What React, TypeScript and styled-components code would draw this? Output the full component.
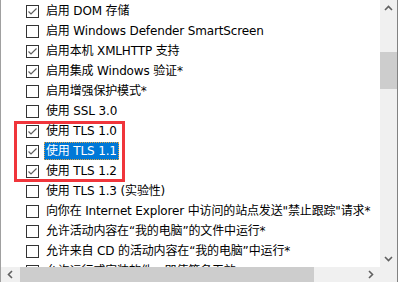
import React from 'react';
import styled, {createGlobalStyle} from 'styled-components';

const GlobalStyle = createGlobalStyle`
    html, body {
        margin: 0;
        padding: 0;
        background: #ffffff;
    }
    body {
        font-family: "DejaVu Sans", "Noto Sans CJK SC", sans-serif;
    }
`;

type Item = {label: string; checked: boolean; selected?: boolean};

const ITEMS: Item[] = [
    {label: '启用 DOM 存储', checked: true},
    {label: '启用 Windows Defender SmartScreen', checked: false},
    {label: '启用本机 XMLHTTP 支持', checked: true},
    {label: '启用集成 Windows 验证*', checked: true},
    {label: '启用增强保护模式*', checked: false},
    {label: '使用 SSL 3.0', checked: false},
    {label: '使用 TLS 1.0', checked: true},
    {label: '使用 TLS 1.1', checked: true, selected: true},
    {label: '使用 TLS 1.2', checked: true},
    {label: '使用 TLS 1.3 (实验性)', checked: false},
    {label: '向你在 Internet Explorer 中访问的站点发送"禁止跟踪"请求*', checked: false},
    {label: '允许活动内容在“我的电脑”的文件中运行*', checked: false},
    {label: '允许来自 CD 的活动内容在“我的电脑”中运行*', checked: false},
    {label: '允许运行或安装软件，即使签名无效', checked: false},
];

const CheckMark = () => (
    <svg width="11" height="11" viewBox="0 0 11 11">
        <polyline points="1.5,5.5 4,8 9.5,2.5" fill="none" stroke="#5f5f5f" strokeWidth="1.2"/>
    </svg>
);

const Chevron = ({dir}: {dir: 'up' | 'down' | 'left' | 'right'}) => {
    const paths = {
        up: '1,6 4.5,2.5 8,6',
        down: '1,3 4.5,6.5 8,3',
        left: '6,1 2.5,4.5 6,8',
        right: '3,1 6.5,4.5 3,8',
    };
    return (
        <svg width="9" height="9" viewBox="0 0 9 9">
            <polyline points={paths[dir]} fill="none" stroke="#606060" strokeWidth="1.6"/>
        </svg>
    );
};

export default function App() {
    return (
        <>
            <GlobalStyle/>
            <Frame>
                <ListArea>
                    {ITEMS.map((item) => (
                        <Row key={item.label}>
                            <Box>{item.checked && <CheckMark/>}</Box>
                            <Label selected={item.selected}>{item.label}</Label>
                        </Row>
                    ))}
                    <Highlight/>
                </ListArea>

                <VScroll>
                    <ArrowCell><Chevron dir="up"/></ArrowCell>
                    <VTrack>
                        <VThumb/>
                    </VTrack>
                    <ArrowCell><Chevron dir="down"/></ArrowCell>
                </VScroll>

                <HScroll>
                    <HArrowCell><Chevron dir="left"/></HArrowCell>
                    <HTrack>
                        <HThumb/>
                    </HTrack>
                    <HArrowCell><Chevron dir="right"/></HArrowCell>
                </HScroll>

                <Corner/>
            </Frame>
        </>
    );
}

const Frame = styled.div`
    display: grid;
    grid-template-columns: 1fr 17px;
    grid-template-rows: 267px 1fr;
    width: 398px;
    height: 282px;
    box-sizing: border-box;
    border-left: 1px solid #a0a0a0;
    border-right: 1px solid #828282;
    overflow: hidden;
`;

const ListArea = styled.div`
    position: relative;
    overflow: hidden;
    padding-top: 1px;
    background: #ffffff;
`;

const Row = styled.div`
    display: flex;
    align-items: center;
    height: 20px;
    padding-left: 25px;
    gap: 7px;
    white-space: nowrap;
`;

const Box = styled.div`
    flex: none;
    display: flex;
    align-items: center;
    justify-content: center;
    width: 13px;
    height: 13px;
    box-sizing: border-box;
    border: 1px solid #333333;
    background: #ffffff;
`;

const Label = styled.span<{selected?: boolean}>`
    font-size: 12px;
    line-height: 18px;
    letter-spacing: -0.15px;
    color: ${p => p.selected ? '#ffffff' : '#000000'};
    background: ${p => p.selected ? '#0078d7' : 'transparent'};
    outline: ${p => p.selected ? '1px dotted #e0a040' : 'none'};
    outline-offset: -1px;
    margin-left: -2px;
    padding: 0 2px;
`;

const Highlight = styled.div`
    position: absolute;
    left: 13px;
    top: 121px;
    width: 111px;
    height: 61px;
    box-sizing: border-box;
    border: 3px solid #f0353b;
    pointer-events: none;
`;

const VScroll = styled.div`
    display: flex;
    flex-direction: column;
    background: #f0f0f0;
`;

const ArrowCell = styled.div`
    display: flex;
    align-items: center;
    justify-content: center;
    height: 17px;
    flex: none;
`;

const VTrack = styled.div`
    flex: 1;
    padding-top: 35px;
`;

const VThumb = styled.div`
    height: 37px;
    background: #cdcdcd;
`;

const HScroll = styled.div`
    display: flex;
    background: #f0f0f0;
`;

const HArrowCell = styled.div`
    display: flex;
    align-items: center;
    justify-content: center;
    width: 19px;
    flex: none;
`;

const HTrack = styled.div`
    flex: 1;
    display: flex;
`;

const HThumb = styled.div`
    width: 294px;
    background: #cdcdcd;
`;

const Corner = styled.div`
    background: #f0f0f0;
`;
